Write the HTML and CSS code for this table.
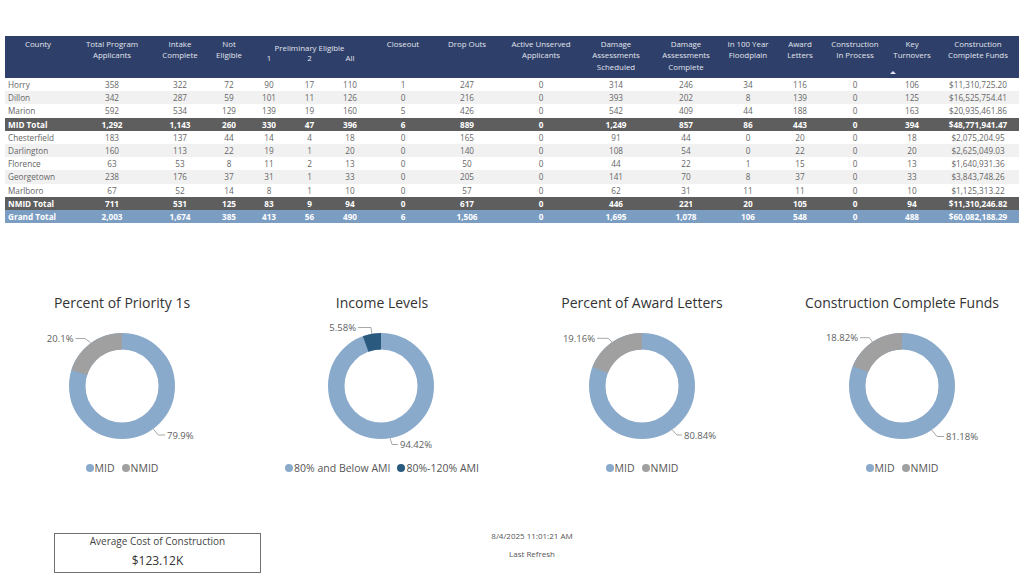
FILE: index.html
```html
<!DOCTYPE html>
<html>
<head>
<meta charset="utf-8">
<link rel="stylesheet" href="styles.css">
</head>
<body>
<div class="page">
  <div class="matrix-wrap">
    <table class="matrix">
      <colgroup>
        <col style="width:66px"><col style="width:82px"><col style="width:54px"><col style="width:44px">
        <col style="width:36px"><col style="width:45px"><col style="width:36px">
        <col style="width:70px"><col style="width:58px"><col style="width:90px"><col style="width:60px">
        <col style="width:80px"><col style="width:44px"><col style="width:60px"><col style="width:50px">
        <col style="width:64px"><col style="width:75px">
      </colgroup>
      <thead>
        <tr>
          <th>County</th>
          <th>Total Program<br>Applicants</th>
          <th>Intake<br>Complete</th>
          <th>Not<br>Eligible</th>
          <th colspan="3" class="pe">
            <div class="pe-title">Preliminary Eligible</div>
            <div class="pe-sub"><span class="s1">1</span><span>2</span><span>All</span></div>
          </th>
          <th>Closeout</th>
          <th>Drop Outs</th>
          <th>Active Unserved<br>Applicants</th>
          <th>Damage<br>Assessments<br>Scheduled</th>
          <th>Damage<br>Assessments<br>Complete</th>
          <th>In 100 Year<br>Floodplain</th>
          <th>Award<br>Letters</th>
          <th>Construction<br>In Process</th>
          <th class="key">Key<br>Turnovers<span class="caret"></span></th>
          <th class="last">Construction<br>Complete Funds</th>
        </tr>
      </thead>
      <tbody>
        <tr><td class="name">Horry</td><td>358</td><td>322</td><td>72</td><td>90</td><td>17</td><td>110</td><td>1</td><td>247</td><td>0</td><td>314</td><td>246</td><td>34</td><td>116</td><td>0</td><td>106</td><td class="last">$11,310,725.20</td></tr>
        <tr class="alt"><td class="name">Dillon</td><td>342</td><td>287</td><td>59</td><td>101</td><td>11</td><td>126</td><td>0</td><td>216</td><td>0</td><td>393</td><td>202</td><td>8</td><td>139</td><td>0</td><td>125</td><td class="last">$16,525,754.41</td></tr>
        <tr><td class="name">Marion</td><td>592</td><td>534</td><td>129</td><td>139</td><td>19</td><td>160</td><td>5</td><td>426</td><td>0</td><td>542</td><td>409</td><td>44</td><td>188</td><td>0</td><td>163</td><td class="last">$20,935,461.86</td></tr>
        <tr class="sub"><td class="name">MID Total</td><td>1,292</td><td>1,143</td><td>260</td><td>330</td><td>47</td><td>396</td><td>6</td><td>889</td><td>0</td><td>1,249</td><td>857</td><td>86</td><td>443</td><td>0</td><td>394</td><td class="last">$48,771,941.47</td></tr>
        <tr><td class="name">Chesterfield</td><td>183</td><td>137</td><td>44</td><td>14</td><td>4</td><td>18</td><td>0</td><td>165</td><td>0</td><td>91</td><td>44</td><td>0</td><td>20</td><td>0</td><td>18</td><td class="last">$2,075,204.95</td></tr>
        <tr class="alt"><td class="name">Darlington</td><td>160</td><td>113</td><td>22</td><td>19</td><td>1</td><td>20</td><td>0</td><td>140</td><td>0</td><td>108</td><td>54</td><td>0</td><td>22</td><td>0</td><td>20</td><td class="last">$2,625,049.03</td></tr>
        <tr><td class="name">Florence</td><td>63</td><td>53</td><td>8</td><td>11</td><td>2</td><td>13</td><td>0</td><td>50</td><td>0</td><td>44</td><td>22</td><td>1</td><td>15</td><td>0</td><td>13</td><td class="last">$1,640,931.36</td></tr>
        <tr class="alt"><td class="name">Georgetown</td><td>238</td><td>176</td><td>37</td><td>31</td><td>1</td><td>33</td><td>0</td><td>205</td><td>0</td><td>141</td><td>70</td><td>8</td><td>37</td><td>0</td><td>33</td><td class="last">$3,843,748.26</td></tr>
        <tr><td class="name">Marlboro</td><td>67</td><td>52</td><td>14</td><td>8</td><td>1</td><td>10</td><td>0</td><td>57</td><td>0</td><td>62</td><td>31</td><td>11</td><td>11</td><td>0</td><td>10</td><td class="last">$1,125,313.22</td></tr>
        <tr class="sub"><td class="name">NMID Total</td><td>711</td><td>531</td><td>125</td><td>83</td><td>9</td><td>94</td><td>0</td><td>617</td><td>0</td><td>446</td><td>221</td><td>20</td><td>105</td><td>0</td><td>94</td><td class="last">$11,310,246.82</td></tr>
        <tr class="grand"><td class="name">Grand Total</td><td>2,003</td><td>1,674</td><td>385</td><td>413</td><td>56</td><td>490</td><td>6</td><td>1,506</td><td>0</td><td>1,695</td><td>1,078</td><td>106</td><td>548</td><td>0</td><td>488</td><td class="last">$60,082,188.29</td></tr>
      </tbody>
    </table>
  </div>

  <div class="charts">
    <div class="chart">
      <div class="chart-title">Percent of Priority 1s</div>
      <svg class="donut" width="220" height="149" viewBox="0 0 220 149">
        <g transform="rotate(-90 110 73)">
          <circle class="ring mid" cx="110" cy="73" r="44.75"/>
          <circle class="ring nmid" cx="110" cy="73" r="44.75" pathLength="100" stroke-dasharray="20.1 79.9" stroke-dashoffset="-79.9"/>
        </g>
        <polyline class="leader" points="78.5,29.5 73,25.5 63.5,25.5"/>
        <text class="lbl" x="61.5" y="25.5" text-anchor="end">20.1%</text>
        <polyline class="leader" points="141.3,116 146.3,122 153,122"/>
        <text class="lbl" x="155" y="122">79.9%</text>
      </svg>
      <div class="legend">
        <span class="item"><span class="dot c-mid"></span>MID</span>
        <span class="item"><span class="dot c-nmid"></span>NMID</span>
      </div>
    </div>

    <div class="chart">
      <div class="chart-title">Income Levels</div>
      <svg class="donut" width="220" height="149" viewBox="0 0 220 149">
        <g transform="rotate(-90 109 73)">
          <circle class="ring mid" cx="109" cy="73" r="44.75"/>
          <circle class="ring ami" cx="109" cy="73" r="44.75" pathLength="100" stroke-dasharray="5.58 94.42" stroke-dashoffset="-94.42"/>
        </g>
        <polyline class="leader" points="99.8,20.5 99,14.5 86,14.5"/>
        <text class="lbl" x="84" y="14.5" text-anchor="end">5.58%</text>
        <polyline class="leader" points="118.2,125.5 120,131.5 126,131.5"/>
        <text class="lbl" x="128" y="131.5">94.42%</text>
      </svg>
      <div class="legend">
        <span class="item"><span class="dot c-mid"></span>80% and Below AMI</span>
        <span class="item"><span class="dot c-ami"></span>80%-120% AMI</span>
      </div>
    </div>

    <div class="chart">
      <div class="chart-title">Percent of Award Letters</div>
      <svg class="donut" width="220" height="149" viewBox="0 0 220 149">
        <g transform="rotate(-90 110 73)">
          <circle class="ring mid" cx="110" cy="73" r="44.75"/>
          <circle class="ring nmid" cx="110" cy="73" r="44.75" pathLength="100" stroke-dasharray="19.16 80.84" stroke-dashoffset="-80.84"/>
        </g>
        <polyline class="leader" points="80,29.3 76.3,25.3 65,25.3"/>
        <text class="lbl" x="63" y="25.3" text-anchor="end">19.16%</text>
        <polyline class="leader" points="140,116.7 145,122 150,122"/>
        <text class="lbl" x="152" y="122">80.84%</text>
      </svg>
      <div class="legend">
        <span class="item"><span class="dot c-mid"></span>MID</span>
        <span class="item"><span class="dot c-nmid"></span>NMID</span>
      </div>
    </div>

    <div class="chart">
      <div class="chart-title">Construction Complete Funds</div>
      <svg class="donut" width="220" height="149" viewBox="0 0 220 149">
        <g transform="rotate(-90 110 73)">
          <circle class="ring mid" cx="110" cy="73" r="44.75"/>
          <circle class="ring nmid" cx="110" cy="73" r="44.75" pathLength="100" stroke-dasharray="18.82 81.18" stroke-dashoffset="-81.18"/>
        </g>
        <polyline class="leader" points="80.4,29 77.3,24.7 68,24.7"/>
        <text class="lbl" x="66" y="24.7" text-anchor="end">18.82%</text>
        <polyline class="leader" points="139.6,117 145,123.5 152,123.5"/>
        <text class="lbl" x="154" y="123.5">81.18%</text>
      </svg>
      <div class="legend">
        <span class="item"><span class="dot c-mid"></span>MID</span>
        <span class="item"><span class="dot c-nmid"></span>NMID</span>
      </div>
    </div>
  </div>

  <div class="bottom">
    <div class="card">
      <div class="card-label">Average Cost of Construction</div>
      <div class="card-value">$123.12K</div>
    </div>
    <div class="refresh">
      <div class="refresh-time">8/4/2025 11:01:21 AM</div>
      <div class="refresh-label">Last Refresh</div>
    </div>
  </div>
</div>
</body>
</html>
```

FILE: styles.css
```css
html, body {
  margin: 0;
  padding: 0;
  background: #ffffff;
}

body {
  width: 1024px;
  height: 584px;
  overflow: hidden;
  font-family: "Open Sans", "Noto Sans", sans-serif;
  color: #555555;
}

.page {
  padding-top: 36px;
}

.matrix-wrap {
  margin: 0 5px;
}

.matrix {
  width: 1014px;
  table-layout: fixed;
  border-collapse: collapse;
  border-spacing: 0;
}

.matrix thead tr {
  height: 42px;
}

.matrix th {
  background: #2e3f69;
  color: #e1e5ee;
  font-weight: 400;
  font-size: 7.9px;
  line-height: 11.5px;
  vertical-align: top;
  text-align: center;
  padding: 2.5px 0 0;
  white-space: nowrap;
}

.matrix th.key {
  position: relative;
}

.caret {
  position: absolute;
  left: 10px;
  bottom: 4px;
  width: 0;
  height: 0;
  border-left: 3px solid transparent;
  border-right: 3px solid transparent;
  border-bottom: 3px solid #e1e5ee;
}

.matrix th.last,
.matrix td.last {
  padding-right: 7px;
}

.pe-title {
  margin-top: 4px;
}

.pe-sub {
  display: grid;
  grid-template-columns: 36px 45px 36px;
  margin-top: -1px;
}

.matrix tbody tr {
  height: 13.2px;
}

.matrix td {
  padding: 0;
  font-size: 8.2px;
  line-height: 13px;
  color: #666666;
  text-align: center;
  white-space: nowrap;
}

.matrix td.name {
  text-align: left;
  padding-left: 3px;
}

.matrix tr.alt td {
  background: #f1f1f1;
}

.matrix tr.sub td {
  background: #5e5e5e;
  color: #ffffff;
  font-weight: 700;
}

.matrix tr.grand td {
  background: #7b9dc2;
  color: #ffffff;
  font-weight: 700;
}

/* charts */
.charts {
  display: flex;
  gap: 40px;
  padding-left: 12px;
  margin-top: 70px;
}

.chart {
  width: 220px;
  display: flex;
  flex-direction: column;
  align-items: center;
}

.chart-title {
  font-size: 14px;
  line-height: 20px;
  color: #333333;
  white-space: nowrap;
}

.donut {
  display: block;
}

.ring {
  fill: none;
  stroke-width: 16.5;
}

.ring.mid {
  stroke: #8aaacb;
}

.ring.nmid {
  stroke: #a0a0a0;
}

.ring.ami {
  stroke: #2b5a7f;
}

.leader {
  fill: none;
  stroke: #a8a8a8;
  stroke-width: 1;
}

.lbl {
  font-family: "Open Sans", "Noto Sans", sans-serif;
  font-size: 9.5px;
  fill: #606060;
  dominant-baseline: central;
}

.legend {
  display: flex;
  gap: 7px;
  font-size: 10.5px;
  line-height: 12px;
  color: #555555;
  white-space: nowrap;
}

.legend .item {
  display: flex;
  align-items: center;
  gap: 1px;
}

.dot {
  width: 8px;
  height: 8px;
  border-radius: 50%;
  display: inline-block;
}

.c-mid { background: #8aaacb; }
.c-nmid { background: #a0a0a0; }
.c-ami { background: #2b5a7f; }

/* bottom */
.bottom {
  display: flex;
  align-items: flex-start;
  padding-left: 54px;
  margin-top: 59px;
}

.card {
  width: 207px;
  height: 40px;
  box-sizing: border-box;
  border: 1px solid #707070;
  text-align: center;
  padding-top: 1px;
}

.card-label {
  font-size: 10px;
  line-height: 13px;
  color: #444444;
}

.card-value {
  font-size: 12px;
  line-height: 16px;
  margin-top: 5px;
  color: #333333;
}

.refresh {
  width: 120px;
  margin-left: 211px;
  margin-top: -2px;
  text-align: center;
  font-size: 8px;
  line-height: 10px;
  color: #555555;
}

.refresh-label {
  margin-top: 8px;
}
```
